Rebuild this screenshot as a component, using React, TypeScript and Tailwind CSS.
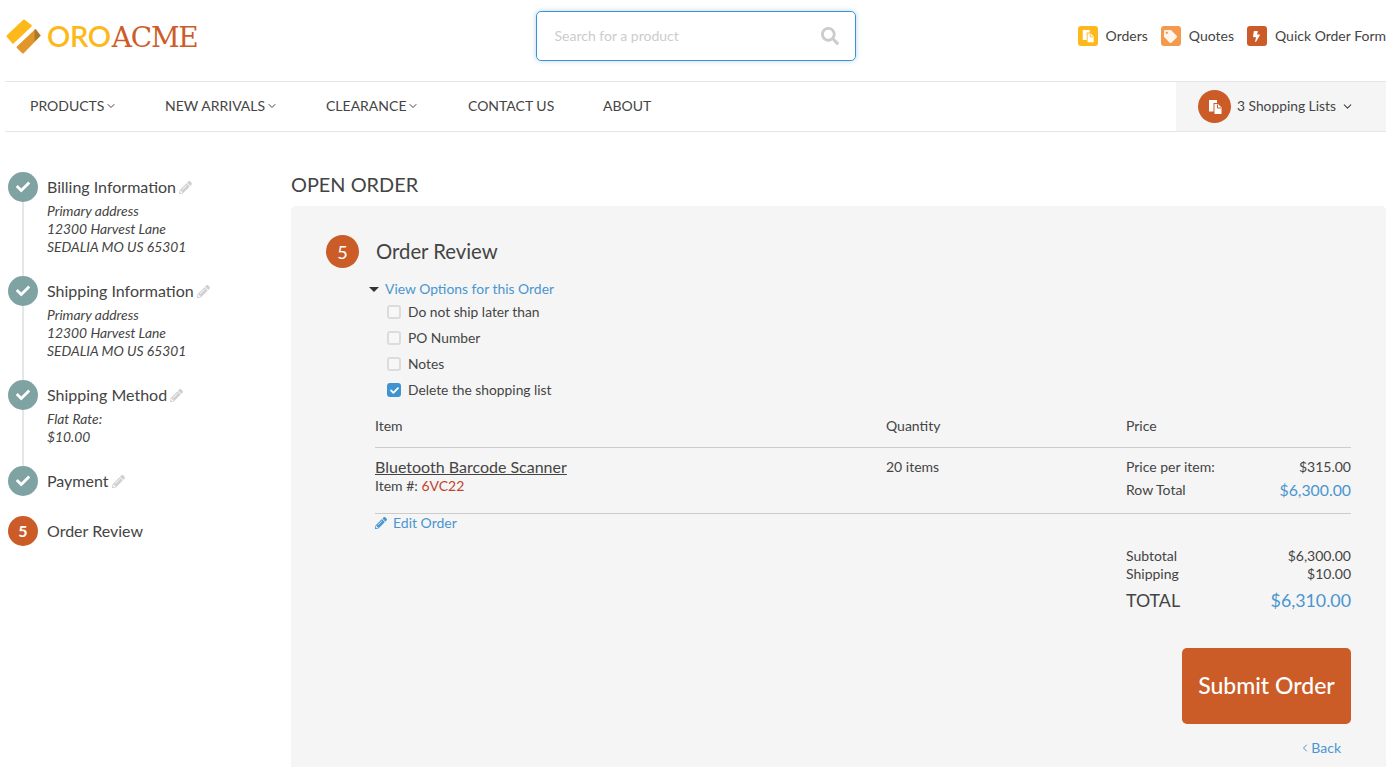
import React from 'react';
import { FaBolt, FaCheck, FaPencilAlt, FaSearch, FaTag } from 'react-icons/fa';
import { FiChevronDown, FiChevronLeft } from 'react-icons/fi';

const DocsIcon: React.FC<{ size: number; fold: string }> = ({ size, fold }) => (
  <svg width={size} height={size} viewBox="0 0 16 16" fill="none">
    <path d="M2 1h8v3H6.500v8.500H2z" fill="#fff" />
    <path d="M7.500 5h3.500l3.500 3.500V15h-7z" fill="#fff" />
    <path d="M10.500 5.500v3.500h3.500" stroke={fold} strokeWidth="1" />
  </svg>
);

const Logo = () => (
  <div className="flex items-center">
    <svg width="36" height="36" viewBox="0 0 36 36" strokeLinejoin="round">
      <path d="M2.500 18L19 2.500l6.900 5.200-18 17z" fill="#fdb91b" stroke="#fdb91b" strokeWidth="2" />
      <path d="M30.600 12.200l3.900 5.300L18 34.500l-5.400-5.300z" fill="#e2962a" stroke="#e2962a" strokeWidth="2" />
      <path d="M30 11.700l5 5.800-5 5z" fill="#a87a2e" stroke="#a87a2e" strokeWidth="1" />
    </svg>
    <div className="ml-[6px] flex items-baseline leading-none">
      <span className="font-['Lato',sans-serif] font-semibold text-[29px] text-[#fdb91b] tracking-[-0.4px]">ORO</span>
      <span className="ml-[1px] font-['DejaVu_Serif',serif] text-[28px] text-[#cd5c28] tracking-[-1.2px]">ACME</span>
    </div>
  </div>
);

const TopLink: React.FC<{ color: string; label: string; children: React.ReactNode }> = ({ color, label, children }) => (
  <div className="flex items-center gap-2">
    <span className={`w-5 h-5 rounded-[3px] flex items-center justify-center text-white ${color}`}>{children}</span>
    <span className="text-sm">{label}</span>
  </div>
);

const NavItem: React.FC<{ label: string; chevron?: boolean; className: string }> = ({ label, chevron, className }) => (
  <div className={`flex items-center pb-[2px] text-sm ${className}`}>
    {label}
    {chevron && <FiChevronDown size={12} strokeWidth={2} className="ml-[1px] mt-[1px]" />}
  </div>
);

const Step: React.FC<{ title: string; lines?: string[]; num?: string; line?: boolean }> = ({ title, lines, num, line }) => (
  <div className="flex gap-[9px]">
    <div className="w-[30px] flex flex-col items-center">
      {num ? (
        <span className="w-[30px] h-[30px] shrink-0 rounded-full bg-[#cb5c28] text-white text-base font-bold flex items-center justify-center">{num}</span>
      ) : (
        <span className="w-[30px] h-[30px] shrink-0 rounded-full bg-[#7fa3a3] text-white flex items-center justify-center">
          <FaCheck size={14} />
        </span>
      )}
      {line && <span className="w-[2px] flex-1 bg-[#e6e6e6]" />}
    </div>
    <div className="pb-5">
      <div className="h-[30px] flex items-center text-base">
        {title}
        {!num && <FaPencilAlt size={13} className="ml-[3px] text-[#d0d0d0]" />}
      </div>
      {lines?.map(l => (
        <div key={l} className="text-[13.85px] leading-[18px] italic">{l}</div>
      ))}
    </div>
  </div>
);

const Check: React.FC<{ label: string; checked?: boolean }> = ({ label, checked }) => (
  <div className="h-[26px] flex items-center text-[13.8px]">
    {checked ? (
      <span className="w-[14px] h-[14px] rounded-[3px] bg-[#3f94cf] text-white flex items-center justify-center">
        <FaCheck size={9} />
      </span>
    ) : (
      <span className="w-[14px] h-[14px] rounded-[3px] border-2 border-[#dcdcdc] bg-[#f7f7f7]" />
    )}
    <span className="ml-[7px]">{label}</span>
  </div>
);

export default function App() {
  return (
    <div className="h-[767px] overflow-hidden bg-white flex flex-col pl-[5px] pr-[9px] font-['Lato',sans-serif] text-[#444]">
      <header className="h-[82px] shrink-0 border-b border-[#e6e6e6] grid grid-cols-[1fr_320px_1fr] items-center pb-[9px]">
        <Logo />
        <div className="h-[50px] rounded-[5px] border border-[#3f94cf] shadow-[0_0_5px_rgba(63,148,207,0.4)] flex items-center justify-between pl-[18px] pr-[16px] text-[#ccc] text-sm">
          Search for a product
          <FaSearch size={18} />
        </div>
        <div className="flex justify-end gap-[13px]">
          <TopLink color="bg-[#fdb91b]" label="Orders"><DocsIcon size={14} fold="#fdb91b" /></TopLink>
          <TopLink color="bg-[#f59a4c]" label="Quotes"><FaTag size={13} className="opacity-90" /></TopLink>
          <TopLink color="bg-[#cb5c28]" label="Quick Order Form"><FaBolt size={11} /></TopLink>
        </div>
      </header>

      <nav className="h-[50px] shrink-0 border-b border-[#e6e6e6] flex items-stretch">
        <NavItem label="PRODUCTS" chevron className="ml-[25px] w-[135px]" />
        <NavItem label="NEW ARRIVALS" chevron className="w-[161px]" />
        <NavItem label="CLEARANCE" chevron className="w-[142px]" />
        <NavItem label="CONTACT US" className="w-[135px]" />
        <NavItem label="ABOUT" className="w-[60px]" />
        <div className="ml-auto w-[210px] bg-[#f5f5f5] flex items-center pl-[22px] text-[13.8px]">
          <span className="w-[33px] h-[33px] rounded-full bg-[#cb5c28] flex items-center justify-center">
            <DocsIcon size={16} fold="#cb5c28" />
          </span>
          <span className="ml-[6px]">3 Shopping Lists</span>
          <FiChevronDown size={13} className="ml-[5px]" />
        </div>
      </nav>

      <div className="flex-1 flex min-h-0">
        <aside className="w-[286px] shrink-0 pt-10 pl-[3px]">
          <Step title="Billing Information" line lines={['Primary address', '12300 Harvest Lane', 'SEDALIA MO US 65301']} />
          <Step title="Shipping Information" line lines={['Primary address', '12300 Harvest Lane', 'SEDALIA MO US 65301']} />
          <Step title="Shipping Method" line lines={['Flat Rate:', '$10.00']} />
          <Step title="Payment" />
          <Step title="Order Review" num="5" />
        </aside>

        <main className="flex-1 flex flex-col min-w-0">
          <h1 className="mt-[38px] h-[36px] text-[19.9px] leading-[28px]">OPEN ORDER</h1>
          <div className="flex-1 bg-[#f5f5f5] rounded-t-[5px] pl-[35px] pr-[35px] pt-[29px]">
            <div className="flex items-center h-[33px]">
              <span className="w-[33px] h-[33px] rounded-full bg-[#cb5c28] text-white text-lg flex items-center justify-center">5</span>
              <span className="ml-[17px] text-[20.3px]">Order Review</span>
            </div>

            <div className="mt-[11px] ml-[43px] flex items-center h-[20px] text-[13.9px] text-[#4a96cf]">
              <span className="w-0 h-0 border-x-[5px] border-x-transparent border-t-[5px] border-t-[#333]" />
              <span className="ml-[6px]">View Options for this Order</span>
            </div>
            <div className="ml-[61px]">
              <Check label="Do not ship later than" />
              <Check label="PO Number" />
              <Check label="Notes" />
              <Check label="Delete the shopping list" checked />
            </div>

            <div className="ml-[49px] mt-1">
              <div className="grid grid-cols-[511px_240px_1fr] h-[41px] pb-[3px] items-center text-sm border-b border-[#ccc]">
                <span>Item</span>
                <span>Quantity</span>
                <span>Price</span>
              </div>
              <div className="grid grid-cols-[511px_240px_1fr] h-[66px] pt-[9px] text-sm border-b border-[#ccc]">
                <div>
                  <div className="text-base leading-[20px] underline">Bluetooth Barcode Scanner</div>
                  <div className="leading-[18px]">Item #: <span className="text-[#c0452c]">6VC22</span></div>
                </div>
                <div className="leading-[20px]">20 items</div>
                <div>
                  <div className="flex justify-between leading-[20px]">
                    <span>Price per item:</span>
                    <span>$315.00</span>
                  </div>
                  <div className="flex justify-between items-center h-[26px]">
                    <span>Row Total</span>
                    <span className="text-[#4a96cf] text-[15.8px]">$6,300.00</span>
                  </div>
                </div>
              </div>
              <div className="flex items-center h-[19px] -mt-[1px] text-sm text-[#4a96cf]">
                <FaPencilAlt size={12} />
                <span className="ml-[6px]">Edit Order</span>
              </div>

              <div className="ml-[751px] mt-[15px] text-sm">
                <div className="flex justify-between h-[18px] items-center">
                  <span>Subtotal</span>
                  <span>$6,300.00</span>
                </div>
                <div className="flex justify-between h-[18px] items-center">
                  <span>Shipping</span>
                  <span>$10.00</span>
                </div>
                <div className="flex justify-between h-[35px] items-center text-[17.8px]">
                  <span>TOTAL</span>
                  <span className="text-[#4a96cf]">$6,310.00</span>
                </div>
              </div>

              <div className="flex justify-end mt-[30px]">
                <button className="w-[169px] h-[76px] pb-[2px] rounded-[5px] bg-[#cb5c28] text-white font-medium text-[23px]">Submit Order</button>
              </div>
              <div className="flex justify-end items-center h-5 mt-[14px] pr-[10px] text-sm text-[#4a96cf]">
                <FiChevronLeft size={12} />
                <span>Back</span>
              </div>
            </div>
          </div>
        </main>
      </div>
    </div>
  );
}
